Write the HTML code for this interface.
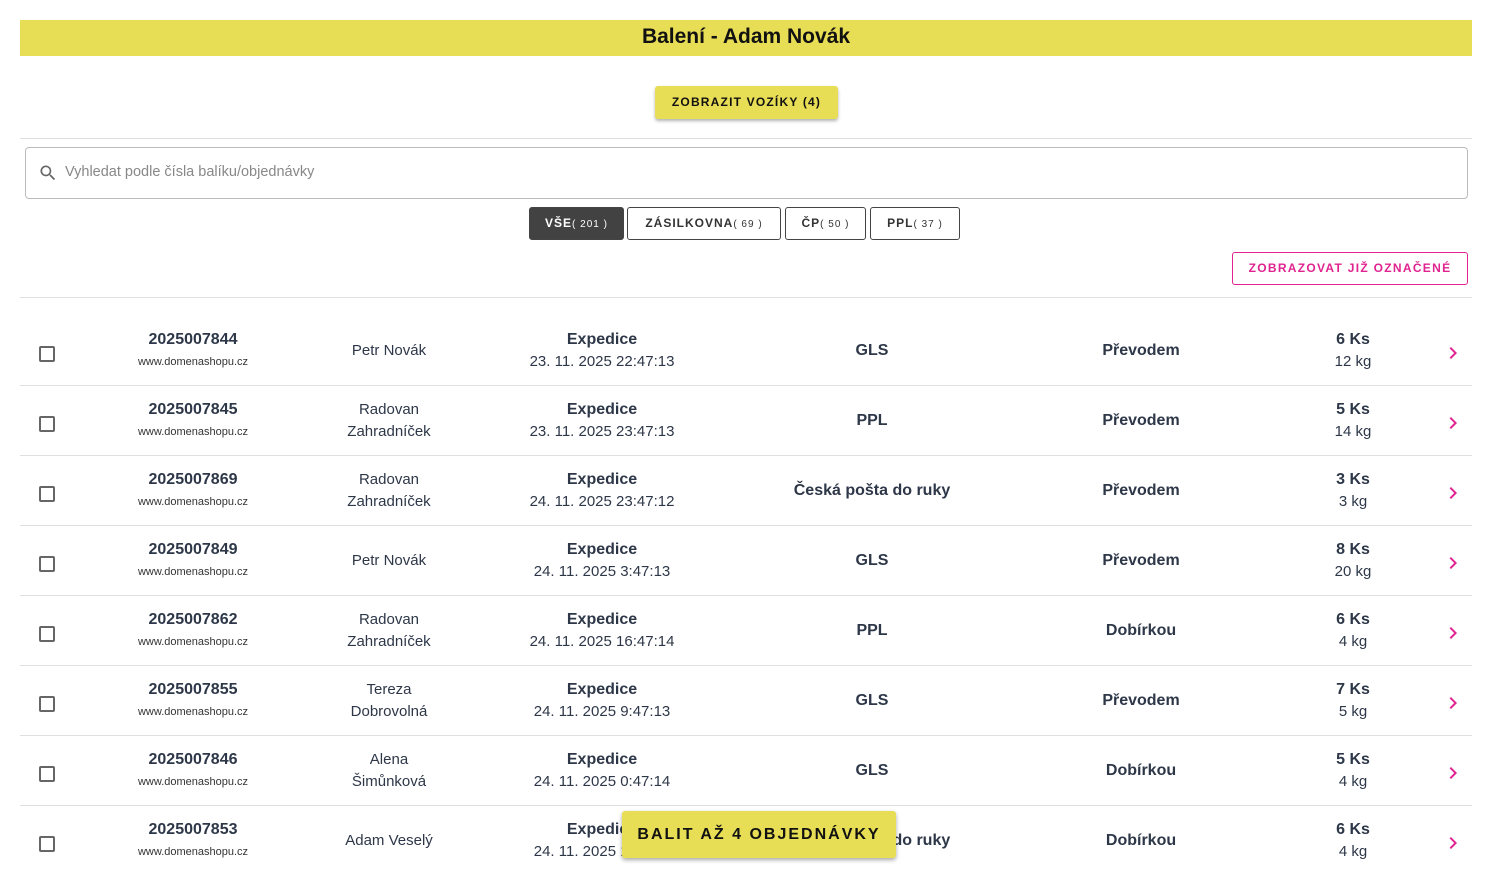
<!DOCTYPE html>
<html><head><meta charset="utf-8"><style>
*{box-sizing:border-box;margin:0;padding:0}
body{width:1492px;height:889px;overflow:hidden;background:#fff;font-family:"Liberation Sans",sans-serif;color:#2d3748;position:relative}
.hdr{position:absolute;left:20px;top:20px;width:1452px;height:36px;background:#e8de55;text-align:center;font-weight:bold;font-size:21px;line-height:34px;color:#111}
.btn1{position:absolute;left:655px;top:86px;width:183px;height:33px;background:#e8de55;border-radius:3px;box-shadow:0 2px 3px rgba(0,0,0,.3);font-size:12px;letter-spacing:1.2px;line-height:33px;text-align:center;color:#111;font-weight:bold}
.hr{position:absolute;left:20px;width:1452px;height:1px;background:#e0e0e0}
.search{position:absolute;left:25px;top:147px;width:1443px;height:52px;border:1px solid #bbb;border-radius:4px}
.search span{position:absolute;left:39px;top:16px;font-size:14.5px;color:#888}
.tab{position:absolute;top:207px;height:33px;border:1px solid #444;border-radius:3px;font-size:12px;letter-spacing:1px;line-height:31px;text-align:center;color:#333;font-weight:bold}
.tab small{font-size:10px;letter-spacing:1px;font-weight:normal}
.mark{position:absolute;left:1232px;top:252px;width:236px;height:33px;border:1px solid #e0238f;border-radius:3px;color:#e0238f;font-size:12px;letter-spacing:1.3px;line-height:31px;text-align:center;font-weight:bold}
.row{position:absolute;left:20px;width:1452px;height:70px;border-bottom:1px solid #e0e0e0}
.c{position:absolute;text-align:center;transform:translateX(-50%);top:50%;white-space:nowrap;font-size:15px;line-height:22px}
.c.y{transform:translate(-50%,-50%)}
.b{font-weight:bold;font-size:16px}
.s{font-size:11px;color:#333}
.cb{position:absolute;left:19px;top:30px;width:16px;height:16px;border:2px solid #666;border-radius:2px}
.chev{position:absolute;left:1421px;top:25px}
.big{position:absolute;left:622px;top:811px;width:274px;height:47px;background:#e8de55;border-radius:3px;box-shadow:0 2px 4px rgba(0,0,0,.35);font-size:16px;letter-spacing:2px;line-height:47px;text-align:center;color:#111;font-weight:bold}
</style></head><body>
<div class="hdr">Balení - Adam Novák</div>
<div class="btn1">ZOBRAZIT VOZÍKY (4)</div>
<div class="hr" style="top:138px"></div>
<div class="search"><svg style="position:absolute;left:12px;top:15px" width="20" height="20" viewBox="0 0 24 24"><path d="M15.5 14h-.8l-.3-.3A6.5 6.5 0 1 0 9.5 16a6.5 6.5 0 0 0 4.2-1.6l.3.3v.8l5 5 1.5-1.5-5-5zm-6 0A4.5 4.5 0 1 1 14 9.5 4.5 4.5 0 0 1 9.5 14z" fill="#666"/></svg><span>Vyhledat podle čísla balíku/objednávky</span></div>
<div class="tab" style="left:529px;width:95px;background:#424242;color:#fff">VŠE<small>( 201 )</small></div>
<div class="tab" style="left:627px;width:154px">ZÁSILKOVNA<small>( 69 )</small></div>
<div class="tab" style="left:785px;width:81px">ČP<small>( 50 )</small></div>
<div class="tab" style="left:870px;width:90px">PPL<small>( 37 )</small></div>
<div class="mark">ZOBRAZOVAT JIŽ OZNAČENÉ</div>
<div class="hr" style="top:297px"></div>

<div class="row" style="top:316px"><div class="cb"></div><div class="c y" style="left:173px"><div class="b">2025007844</div><div class="s">www.domenashopu.cz</div></div><div class="c y" style="left:369px">Petr Novák</div><div class="c y" style="left:582px"><div class="b">Expedice</div>23. 11. 2025 22:47:13</div><div class="c y b" style="left:852px">GLS</div><div class="c y b" style="left:1121px">Převodem</div><div class="c y" style="left:1333px"><div class="b">6 Ks</div>12 kg</div><svg class="chev" width="24" height="24" viewBox="0 0 24 24"><path d="M8.6 16.6 13.2 12 8.6 7.4 10 6l6 6-6 6z" fill="#e0238f"/></svg></div>
<div class="row" style="top:386px"><div class="cb"></div><div class="c y" style="left:173px"><div class="b">2025007845</div><div class="s">www.domenashopu.cz</div></div><div class="c y" style="left:369px">Radovan<br>Zahradníček</div><div class="c y" style="left:582px"><div class="b">Expedice</div>23. 11. 2025 23:47:13</div><div class="c y b" style="left:852px">PPL</div><div class="c y b" style="left:1121px">Převodem</div><div class="c y" style="left:1333px"><div class="b">5 Ks</div>14 kg</div><svg class="chev" width="24" height="24" viewBox="0 0 24 24"><path d="M8.6 16.6 13.2 12 8.6 7.4 10 6l6 6-6 6z" fill="#e0238f"/></svg></div>
<div class="row" style="top:456px"><div class="cb"></div><div class="c y" style="left:173px"><div class="b">2025007869</div><div class="s">www.domenashopu.cz</div></div><div class="c y" style="left:369px">Radovan<br>Zahradníček</div><div class="c y" style="left:582px"><div class="b">Expedice</div>24. 11. 2025 23:47:12</div><div class="c y b" style="left:852px">Česká pošta do ruky</div><div class="c y b" style="left:1121px">Převodem</div><div class="c y" style="left:1333px"><div class="b">3 Ks</div>3 kg</div><svg class="chev" width="24" height="24" viewBox="0 0 24 24"><path d="M8.6 16.6 13.2 12 8.6 7.4 10 6l6 6-6 6z" fill="#e0238f"/></svg></div>
<div class="row" style="top:526px"><div class="cb"></div><div class="c y" style="left:173px"><div class="b">2025007849</div><div class="s">www.domenashopu.cz</div></div><div class="c y" style="left:369px">Petr Novák</div><div class="c y" style="left:582px"><div class="b">Expedice</div>24. 11. 2025 3:47:13</div><div class="c y b" style="left:852px">GLS</div><div class="c y b" style="left:1121px">Převodem</div><div class="c y" style="left:1333px"><div class="b">8 Ks</div>20 kg</div><svg class="chev" width="24" height="24" viewBox="0 0 24 24"><path d="M8.6 16.6 13.2 12 8.6 7.4 10 6l6 6-6 6z" fill="#e0238f"/></svg></div>
<div class="row" style="top:596px"><div class="cb"></div><div class="c y" style="left:173px"><div class="b">2025007862</div><div class="s">www.domenashopu.cz</div></div><div class="c y" style="left:369px">Radovan<br>Zahradníček</div><div class="c y" style="left:582px"><div class="b">Expedice</div>24. 11. 2025 16:47:14</div><div class="c y b" style="left:852px">PPL</div><div class="c y b" style="left:1121px">Dobírkou</div><div class="c y" style="left:1333px"><div class="b">6 Ks</div>4 kg</div><svg class="chev" width="24" height="24" viewBox="0 0 24 24"><path d="M8.6 16.6 13.2 12 8.6 7.4 10 6l6 6-6 6z" fill="#e0238f"/></svg></div>
<div class="row" style="top:666px"><div class="cb"></div><div class="c y" style="left:173px"><div class="b">2025007855</div><div class="s">www.domenashopu.cz</div></div><div class="c y" style="left:369px">Tereza<br>Dobrovolná</div><div class="c y" style="left:582px"><div class="b">Expedice</div>24. 11. 2025 9:47:13</div><div class="c y b" style="left:852px">GLS</div><div class="c y b" style="left:1121px">Převodem</div><div class="c y" style="left:1333px"><div class="b">7 Ks</div>5 kg</div><svg class="chev" width="24" height="24" viewBox="0 0 24 24"><path d="M8.6 16.6 13.2 12 8.6 7.4 10 6l6 6-6 6z" fill="#e0238f"/></svg></div>
<div class="row" style="top:736px"><div class="cb"></div><div class="c y" style="left:173px"><div class="b">2025007846</div><div class="s">www.domenashopu.cz</div></div><div class="c y" style="left:369px">Alena<br>Šimůnková</div><div class="c y" style="left:582px"><div class="b">Expedice</div>24. 11. 2025 0:47:14</div><div class="c y b" style="left:852px">GLS</div><div class="c y b" style="left:1121px">Dobírkou</div><div class="c y" style="left:1333px"><div class="b">5 Ks</div>4 kg</div><svg class="chev" width="24" height="24" viewBox="0 0 24 24"><path d="M8.6 16.6 13.2 12 8.6 7.4 10 6l6 6-6 6z" fill="#e0238f"/></svg></div>
<div class="row" style="top:806px;border-bottom:none"><div class="cb"></div><div class="c y" style="left:173px"><div class="b">2025007853</div><div class="s">www.domenashopu.cz</div></div><div class="c y" style="left:369px">Adam Veselý</div><div class="c y" style="left:582px"><div class="b">Expedice</div>24. 11. 2025 1:47:13</div><div class="c y b" style="left:852px">Česká pošta do ruky</div><div class="c y b" style="left:1121px">Dobírkou</div><div class="c y" style="left:1333px"><div class="b">6 Ks</div>4 kg</div><svg class="chev" width="24" height="24" viewBox="0 0 24 24"><path d="M8.6 16.6 13.2 12 8.6 7.4 10 6l6 6-6 6z" fill="#e0238f"/></svg></div>
<div class="big">BALIT AŽ 4 OBJEDNÁVKY</div>
</body></html>
